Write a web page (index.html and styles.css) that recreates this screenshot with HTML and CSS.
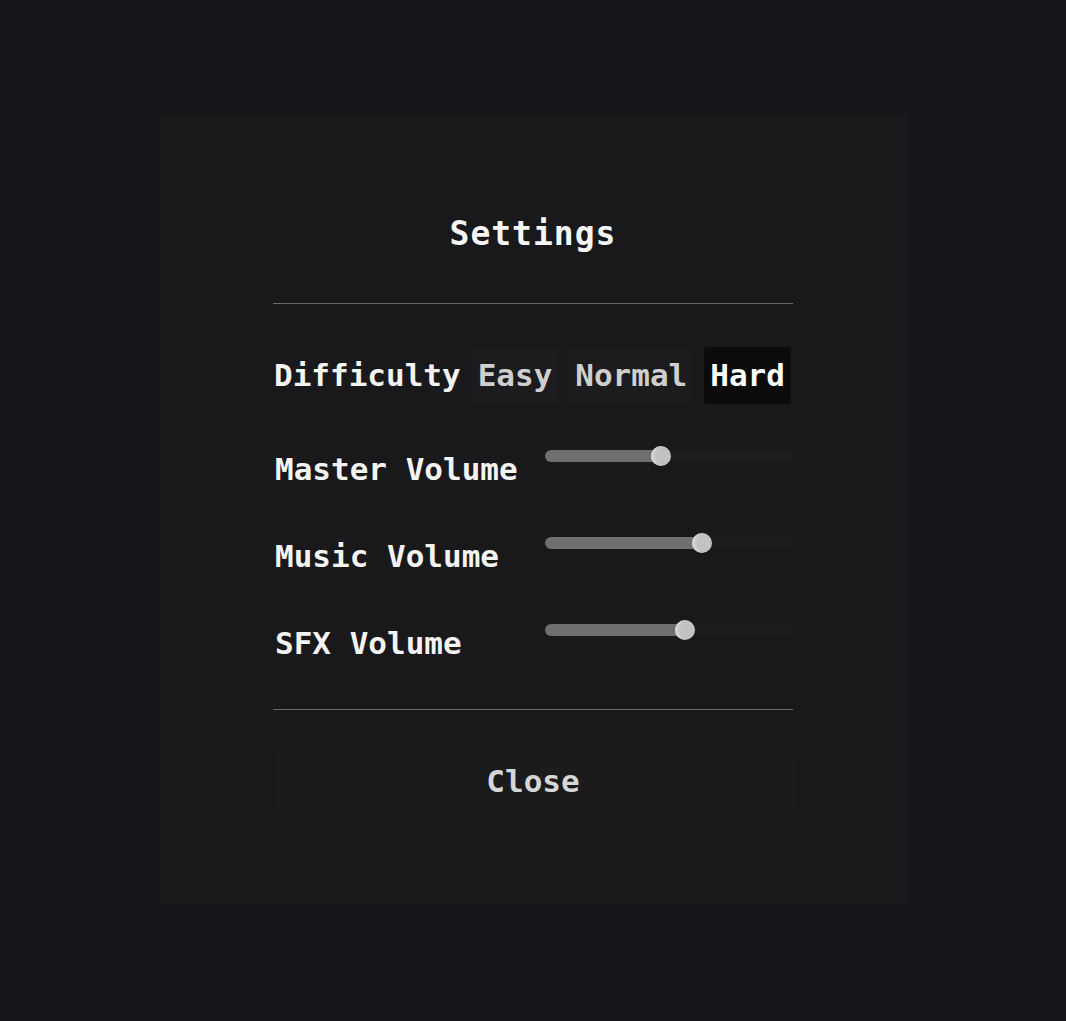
FILE: index.html
```html
<!DOCTYPE html>
<html lang="en">
<head>
<meta charset="utf-8">
<title>Settings</title>
<link rel="stylesheet" href="styles.css">
</head>
<body>
<div class="panel">
  <div class="content">
    <h1 class="title">Settings</h1>
    <div class="divider"></div>
    <div class="difficulty">
      <span class="label">Difficulty</span>
      <div class="options">
        <button class="opt">Easy</button>
        <button class="opt">Normal</button>
        <button class="opt active">Hard</button>
      </div>
    </div>
    <div class="sliders">
      <div class="row">
        <span class="label">Master Volume</span>
        <div class="slider" style="--v: 116px">
          <div class="fill"></div>
          <div class="thumb"></div>
        </div>
      </div>
      <div class="row">
        <span class="label">Music Volume</span>
        <div class="slider" style="--v: 157px">
          <div class="fill"></div>
          <div class="thumb"></div>
        </div>
      </div>
      <div class="row">
        <span class="label">SFX Volume</span>
        <div class="slider" style="--v: 140px">
          <div class="fill"></div>
          <div class="thumb"></div>
        </div>
      </div>
    </div>
    <div class="divider"></div>
    <button class="close">Close</button>
  </div>
</div>
</body>
</html>
```

FILE: styles.css
```css
html, body {
  margin: 0;
  padding: 0;
}

body {
  background: #16161a;
  font-family: "DejaVu Sans Mono", "Liberation Mono", monospace;
  font-weight: bold;
  color: #f2f2f2;
  padding-top: 114px;
}

.panel {
  width: 748px;
  height: 790px;
  margin: 0 auto;
  background: #19191b;
  box-sizing: border-box;
  padding-top: 100px;
}

.content {
  width: 520px;
  margin: 0 auto;
}

.title {
  margin: 0;
  text-align: center;
  font-size: 33px;
  line-height: 40px;
  letter-spacing: 1px;
  font-weight: bold;
  color: #f6f6f6;
}

.divider {
  height: 1px;
  background: #6a6a6a;
}

.title + .divider {
  margin-top: 49px;
}

.difficulty {
  display: flex;
  align-items: center;
  gap: 11px;
  margin-top: 43px;
  padding-left: 1px;
}

.label {
  font-size: 31px;
  line-height: 37px;
  color: #f4f4f4;
  white-space: nowrap;
}

.options {
  display: flex;
  gap: 11px;
}

.opt {
  font-family: inherit;
  font-weight: bold;
  font-size: 31px;
  line-height: 37px;
  padding: 10px 6px;
  border: none;
  border-radius: 3px;
  background: #1c1c1e;
  color: #cfcfcf;
}

.opt.active {
  background: #0b0b0b;
  color: #ffffff;
}

.sliders {
  display: flex;
  flex-direction: column;
  gap: 49px;
  margin-top: 46px;
  margin-bottom: 47px;
}

.row {
  display: grid;
  grid-template-columns: 272px 248px;
  align-items: start;
}

.row .label {
  padding-left: 2px;
  padding-top: 1px;
}

.slider {
  position: relative;
  height: 12px;
  border-radius: 6px;
  background: #1c1c1e;
}

.fill {
  width: var(--v);
  height: 12px;
  border-radius: 6px;
  background: #6f6f6f;
}

.thumb {
  position: absolute;
  top: -4px;
  left: calc(var(--v) - 10px);
  width: 20px;
  height: 20px;
  border-radius: 50%;
  background: #c2c2c2;
  box-shadow: inset 5px 0 3px -2px #d8d8d8;
}

.close {
  display: block;
  width: 520px;
  height: 58px;
  margin-top: 42px;
  border: none;
  border-radius: 2px;
  background: #1b1b1b;
  color: #d6d6d6;
  font-family: inherit;
  font-weight: bold;
  font-size: 31px;
  letter-spacing: 0;
}
```
